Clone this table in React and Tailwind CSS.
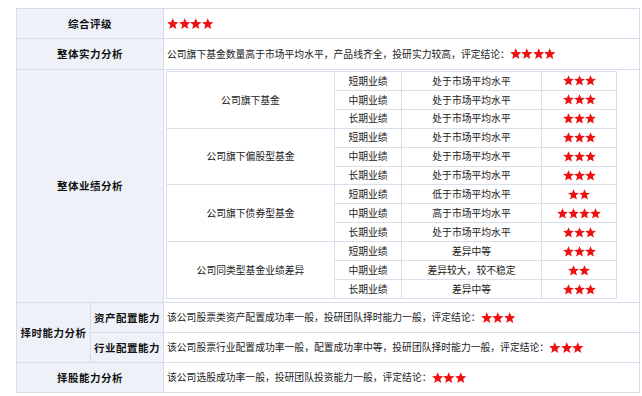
import React from "react";

function Star({ size = 11 }) {
  return (
    <svg width={size} height={size} viewBox="0 0 24 24" className="inline-block shrink-0">
      <polygon
        fill="#ee1111"
        points="12,0.5 15.3,8.4 23.8,8.9 17.2,14.4 19.4,23 12,18.3 4.6,23 6.8,14.4 0.2,8.9 8.7,8.4"
      />
    </svg>
  );
}

function Stars({ n, size = 11 }) {
  return (
    <span className="inline-flex items-center">
      {Array.from({ length: n }).map((_, i) => (
        <Star key={i} size={size} />
      ))}
    </span>
  );
}

const groups = [
  {
    name: "公司旗下基金",
    rows: [
      ["短期业绩", "处于市场平均水平", 3],
      ["中期业绩", "处于市场平均水平", 3],
      ["长期业绩", "处于市场平均水平", 3],
    ],
  },
  {
    name: "公司旗下偏股型基金",
    rows: [
      ["短期业绩", "处于市场平均水平", 3],
      ["中期业绩", "处于市场平均水平", 3],
      ["长期业绩", "处于市场平均水平", 3],
    ],
  },
  {
    name: "公司旗下债券型基金",
    rows: [
      ["短期业绩", "低于市场平均水平", 2],
      ["中期业绩", "高于市场平均水平", 4],
      ["长期业绩", "处于市场平均水平", 3],
    ],
  },
  {
    name: "公司同类型基金业绩差异",
    rows: [
      ["短期业绩", "差异中等", 3],
      ["中期业绩", "差异较大，较不稳定", 2],
      ["长期业绩", "差异中等", 3],
    ],
  },
];

function Label({ children, className = "" }) {
  return (
    <div
      className={
        "bg-[#eef1f7] flex items-center justify-center font-bold text-[10.5px] tracking-[0.5px] text-[#111] whitespace-nowrap " +
        className
      }
    >
      {children}
    </div>
  );
}

function Content({ children, className = "" }) {
  return (
    <div className={"bg-white flex items-center pl-[3px] text-[9.8px] text-[#222] whitespace-nowrap " + className}>
      {children}
    </div>
  );
}

function Nested() {
  const cells = [];
  groups.forEach((g, gi) => {
    g.rows.forEach((r, ri) => {
      if (ri === 0) {
        cells.push(
          <div key={`n${gi}`} className="row-span-3 bg-white flex items-center justify-center">
            {g.name}
          </div>
        );
      }
      cells.push(
        <div key={`p${gi}${ri}`} className="bg-white flex items-center justify-center">
          {r[0]}
        </div>
      );
      cells.push(
        <div key={`d${gi}${ri}`} className="bg-white flex items-center justify-center">
          {r[1]}
        </div>
      );
      cells.push(
        <div key={`s${gi}${ri}`} className="bg-white flex items-center justify-center">
          <Stars n={r[2]} />
        </div>
      );
    });
  });
  return (
    <div className="w-[451px] h-[228px] grid grid-cols-[167px_66px_139px_74px] grid-rows-[repeat(12,minmax(0,1fr))] gap-px bg-[#d9dfea] border border-[#d9dfea] text-[9.8px] text-[#222]">
      {cells}
    </div>
  );
}

export default function App() {
  return (
    <div className="w-[642px] h-[396px] bg-white font-['Noto_Sans_CJK_SC',sans-serif] pt-[8px] pl-[16px]">
      <div className="w-[624px] grid grid-cols-[73px_72px_475px] grid-rows-[29px_30px_232px_29px_29px_29px] gap-px bg-[#d6dce8] border border-[#d6dce8]">
        <Label className="col-span-2">综合评级</Label>
        <Content>
          <Stars n={4} size={11.5} />
        </Content>

        <Label className="col-span-2">整体实力分析</Label>
        <Content>
          公司旗下基金数量高于市场平均水平，产品线齐全，投研实力较高，评定结论：
          <Stars n={4} size={11.5} />
        </Content>

        <Label className="col-span-2">整体业绩分析</Label>
        <div className="bg-white pl-[2px] pt-[1px]">
          <Nested />
        </div>

        <Label className="row-span-2">择时能力分析</Label>
        <Label>资产配置能力</Label>
        <Content>
          该公司股票类资产配置成功率一般，投研团队择时能力一般，评定结论：
          <Stars n={3} size={11.5} />
        </Content>
        <Label>行业配置能力</Label>
        <Content>
          该公司股票行业配置成功率一般，配置成功率中等，投研团队择时能力一般，评定结论：
          <Stars n={3} size={11.5} />
        </Content>

        <Label className="col-span-2">择股能力分析</Label>
        <Content>
          该公司选股成功率一般，投研团队投资能力一般，评定结论：
          <Stars n={3} size={11.5} />
        </Content>
      </div>
    </div>
  );
}
